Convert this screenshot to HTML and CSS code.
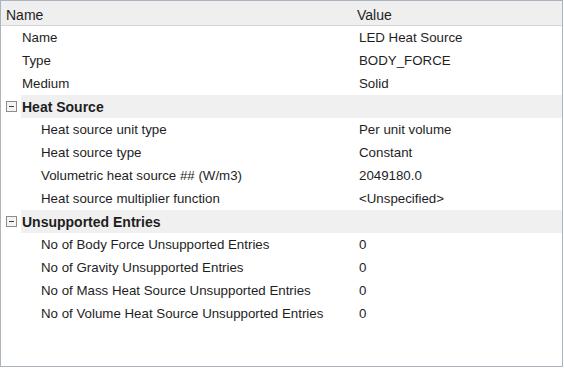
FILE: index.html
```html
<!DOCTYPE html>
<html lang="en">
<head>
    <meta charset="UTF-8">
    <title>Properties</title>
    <link rel="stylesheet" href="styles.css">
</head>
<body>
    <div class="grid">
        <div class="head">
            <div class="col-name">Name</div>
            <div class="col-value">Value</div>
        </div>

        <div class="row">
            <div class="col-name lvl1">Name</div>
            <div class="col-value">LED Heat Source</div>
        </div>
        <div class="row">
            <div class="col-name lvl1">Type</div>
            <div class="col-value">BODY_FORCE</div>
        </div>
        <div class="row">
            <div class="col-name lvl1">Medium</div>
            <div class="col-value">Solid</div>
        </div>

        <div class="group">
            <span class="toggle"></span>
            <div class="group-label">Heat Source</div>
        </div>
        <div class="row">
            <div class="col-name lvl2">Heat source unit type</div>
            <div class="col-value">Per unit volume</div>
        </div>
        <div class="row">
            <div class="col-name lvl2">Heat source type</div>
            <div class="col-value">Constant</div>
        </div>
        <div class="row">
            <div class="col-name lvl2">Volumetric heat source ## (W/m3)</div>
            <div class="col-value">2049180.0</div>
        </div>
        <div class="row">
            <div class="col-name lvl2">Heat source multiplier function</div>
            <div class="col-value">&lt;Unspecified&gt;</div>
        </div>

        <div class="group">
            <span class="toggle"></span>
            <div class="group-label">Unsupported Entries</div>
        </div>
        <div class="row">
            <div class="col-name lvl2">No of Body Force Unsupported Entries</div>
            <div class="col-value">0</div>
        </div>
        <div class="row">
            <div class="col-name lvl2">No of Gravity Unsupported Entries</div>
            <div class="col-value">0</div>
        </div>
        <div class="row">
            <div class="col-name lvl2">No of Mass Heat Source Unsupported Entries</div>
            <div class="col-value">0</div>
        </div>
        <div class="row">
            <div class="col-name lvl2">No of Volume Heat Source Unsupported Entries</div>
            <div class="col-value">0</div>
        </div>
    </div>
</body>
</html>
```

FILE: styles.css
```css
body {
    margin: 0;
    background: #ffffff;
    font-family: 'Liberation Sans', Arial, sans-serif;
    font-size: 13.3px;
    color: #1e1e1e;
}
.grid {
    width: 561px;
    height: 365px;
    border: 1px solid #aab4be;
    background: #ffffff;
}
.head {
    display: flex;
    align-items: center;
    height: 25px;
    padding-top: 4px;
    box-sizing: border-box;
    background: #efefef;
    border-bottom: 1px solid #d7d7d7;
}
.head .col-name {
    width: 356px;
    padding-left: 5px;
    font-size: 14px;
}
.head .col-value {
    font-size: 14px;
}
.row {
    display: flex;
    align-items: center;
    height: 23px;
}
.col-name {
    width: 358px;
    box-sizing: border-box;
    white-space: nowrap;
}
.lvl1 {
    padding-left: 21px;
}
.lvl2 {
    padding-left: 40px;
}
.col-value {
    white-space: nowrap;
}
.group {
    display: flex;
    align-items: center;
    height: 23px;
}
.toggle {
    width: 9px;
    height: 9px;
    margin: 0 4px 0 5px;
    border: 1px solid #8c8c8c;
    background: #f4f4f4;
    position: relative;
}
.toggle::after {
    content: '';
    position: absolute;
    left: 2px;
    top: 4px;
    width: 5px;
    height: 1px;
    background: #3c3c3c;
}
.group-label {
    flex: 1;
    height: 100%;
    display: flex;
    align-items: center;
    padding-left: 1px;
    background: #f0f0f0;
    font-weight: bold;
    font-size: 14px;
}
```
